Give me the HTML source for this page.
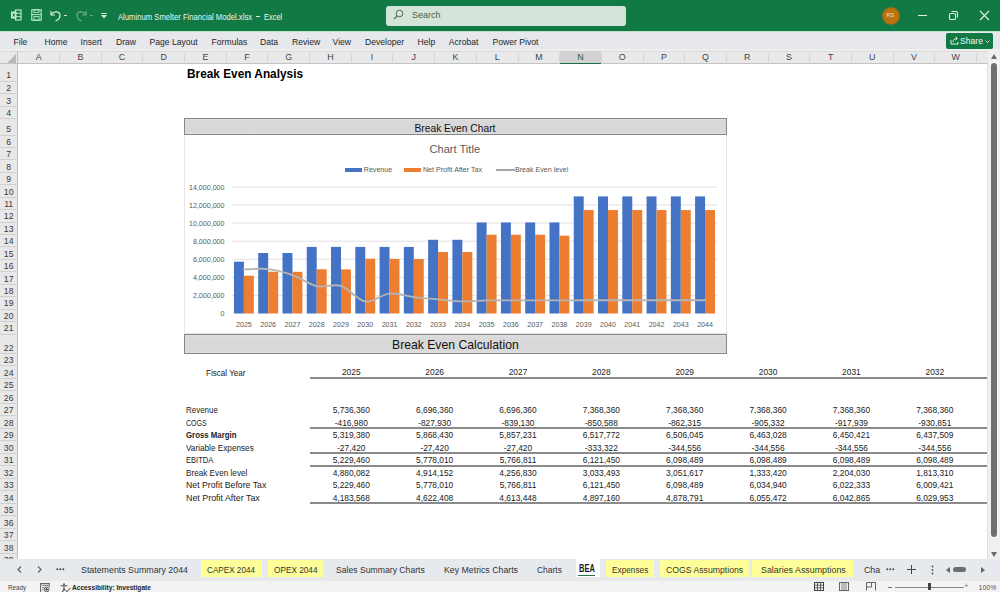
<!DOCTYPE html><html><head><meta charset="utf-8"><style>
*{margin:0;padding:0;box-sizing:border-box}
html,body{width:1000px;height:592px;overflow:hidden;background:#fff;font-family:"Liberation Sans", sans-serif;}
.a{position:absolute;white-space:nowrap}
.t{position:absolute;white-space:nowrap;line-height:1}
</style></head><body>
<div class="a" style="left:0;top:0;width:1000px;height:31px;background:#117a44"></div>
<svg class="a" style="left:10px;top:9px" width="12" height="12" viewBox="0 0 12 12">
<rect x="5.5" y="1" width="5.5" height="10" fill="none" stroke="#c2f0d4" stroke-width="1.1"/>
<line x1="5.5" y1="4.3" x2="11" y2="4.3" stroke="#c2f0d4" stroke-width="0.9"/>
<line x1="5.5" y1="7.6" x2="11" y2="7.6" stroke="#c2f0d4" stroke-width="0.9"/>
<rect x="1" y="2.5" width="5.5" height="7" fill="#c2f0d4"/>
<path d="M2.6 4.4 L4.9 7.6 M4.9 4.4 L2.6 7.6" stroke="#1d5f3a" stroke-width="0.9"/>
</svg>
<svg class="a" style="left:31px;top:9px" width="11" height="12" viewBox="0 0 11 12">
<rect x="0.8" y="0.8" width="9.4" height="10.4" fill="none" stroke="#b9f0cf" stroke-width="1.1"/>
<line x1="0.8" y1="5.6" x2="10.2" y2="5.6" stroke="#b9f0cf" stroke-width="1"/>
<rect x="3" y="0.8" width="5" height="2.6" fill="none" stroke="#b9f0cf" stroke-width="0.9"/>
<rect x="3" y="7.6" width="5" height="3.6" fill="none" stroke="#b9f0cf" stroke-width="0.9"/>
</svg>
<svg class="a" style="left:49px;top:8px" width="13" height="14" viewBox="0 0 13 14">
<path d="M2 3 L2 7 L6 7" fill="none" stroke="#dcefe3" stroke-width="1.2"/>
<path d="M2.5 6.5 C5 2.5 11 3 11 7.5 C11 10 9 12 6.5 13" fill="none" stroke="#dcefe3" stroke-width="1.2"/>
</svg>
<div class="a" style="left:64px;top:15px;width:3px;height:1px;background:#cfe6d7"></div>
<svg class="a" style="left:75px;top:8px" width="13" height="14" viewBox="0 0 13 14" opacity="0.45">
<path d="M11 3 L11 7 L7 7" fill="none" stroke="#dcefe3" stroke-width="1.2"/>
<path d="M10.5 6.5 C8 2.5 2 3 2 7.5 C2 10 4 12 6.5 13" fill="none" stroke="#dcefe3" stroke-width="1.2"/>
</svg>
<div class="a" style="left:90px;top:15px;width:3px;height:1px;background:#5ea57c"></div>
<div class="a" style="left:101px;top:13px;width:6px;height:1px;background:#cfe6d7"></div>
<svg class="a" style="left:101px;top:15px" width="6" height="4" viewBox="0 0 6 4"><path d="M0 0 L6 0 L3 3.5Z" fill="#cfe6d7"/></svg>
<div class="t" style="left:117.5px;top:12.5px;font-size:8.6px;color:#eef6f1;transform:scaleX(0.894);transform-origin:0 0">Aluminum Smelter Financial Model.xlsx</div>
<div class="a" style="left:256px;top:16px;width:3.5px;height:0.9px;background:#dfeee5"></div>
<div class="t" style="left:263.5px;top:12.5px;font-size:8.6px;color:#eef6f1;transform:scaleX(0.87);transform-origin:0 0">Excel</div>
<div class="a" style="left:385.5px;top:5.5px;width:240px;height:20px;background:#d5e4d9;border-radius:3px"></div>
<svg class="a" style="left:393px;top:9px" width="11" height="11" viewBox="0 0 11 11">
<circle cx="6.5" cy="4.5" r="3.3" fill="none" stroke="#4f6a58" stroke-width="1"/>
<line x1="4.2" y1="6.8" x2="1" y2="10" stroke="#4f6a58" stroke-width="1.1"/>
</svg>
<div class="t" style="left:412px;top:11px;font-size:9px;color:#4a5e50">Search</div>
<div class="a" style="left:883px;top:7.5px;width:16px;height:16px;border-radius:50%;background:#b8720e;box-shadow:0 0 0 1px #9a6a1c"></div>
<div class="t" style="left:886.5px;top:12.5px;font-size:5.5px;color:#f5e3c3">RS</div>
<div class="a" style="left:918px;top:15px;width:9px;height:1px;background:#e4f1e8"></div>
<svg class="a" style="left:948px;top:10px" width="11" height="11" viewBox="0 0 11 11">
<rect x="1.5" y="3.5" width="6" height="6" rx="1.2" fill="none" stroke="#e4f1e8" stroke-width="1.1"/>
<path d="M3.5 1.5 L8 1.5 Q9.5 1.5 9.5 3 L9.5 7.5" fill="none" stroke="#e4f1e8" stroke-width="1.1"/>
</svg>
<svg class="a" style="left:979px;top:10px" width="11" height="11" viewBox="0 0 11 11">
<path d="M1 1 L10 10 M10 1 L1 10" stroke="#e4f1e8" stroke-width="1.1"/>
</svg>
<div class="a" style="left:0;top:31px;width:1000px;height:17.5px;background:#e6e8ec"></div>
<div class="a" style="left:0;top:31px;width:1000px;height:1px;background:#b9e3c9"></div>
<div class="a" style="left:0;top:48.5px;width:1000px;height:2.5px;background:#eeeeee"></div>
<div class="t" style="left:13.5px;top:38px;font-size:8.6px;color:#262626">File</div>
<div class="t" style="left:44.6px;top:38px;font-size:8.6px;color:#262626">Home</div>
<div class="t" style="left:80.5px;top:38px;font-size:8.6px;color:#262626">Insert</div>
<div class="t" style="left:116px;top:38px;font-size:8.6px;color:#262626">Draw</div>
<div class="t" style="left:149.5px;top:38px;font-size:8.6px;color:#262626">Page Layout</div>
<div class="t" style="left:211.6px;top:38px;font-size:8.6px;color:#262626">Formulas</div>
<div class="t" style="left:260px;top:38px;font-size:8.6px;color:#262626">Data</div>
<div class="t" style="left:292px;top:38px;font-size:8.6px;color:#262626">Review</div>
<div class="t" style="left:332.6px;top:38px;font-size:8.6px;color:#262626">View</div>
<div class="t" style="left:365px;top:38px;font-size:8.6px;color:#262626">Developer</div>
<div class="t" style="left:417.6px;top:38px;font-size:8.6px;color:#262626">Help</div>
<div class="t" style="left:448.8px;top:38px;font-size:8.6px;color:#262626">Acrobat</div>
<div class="t" style="left:492.6px;top:38px;font-size:8.6px;color:#262626">Power Pivot</div>
<div class="a" style="left:946px;top:32.5px;width:46.5px;height:16px;background:#117a44;border-radius:2px"></div>
<svg class="a" style="left:950px;top:36px" width="9" height="9" viewBox="0 0 9 9">
<path d="M1 4 L1 8 L8 8 L8 6" fill="none" stroke="#e8f3ec" stroke-width="1"/>
<path d="M3 6 C3 3.5 5 2.5 7 2.5 M5.5 1 L7.3 2.5 L5.5 4" fill="none" stroke="#e8f3ec" stroke-width="1"/>
</svg>
<div class="t" style="left:960px;top:37px;font-size:8.6px;color:#f2f8f4">Share</div>
<svg class="a" style="left:985px;top:40px" width="5" height="3" viewBox="0 0 5 3"><path d="M0.5 0.5 L2.5 2.5 L4.5 0.5" fill="none" stroke="#e8f3ec" stroke-width="0.9"/></svg>
<div class="a" style="left:0;top:51px;width:1000px;height:12.6px;background:#e9e9e9;border-top:1px solid #dadada;border-bottom:1px solid #c4c4c4"></div>
<svg class="a" style="left:7px;top:53.5px" width="9" height="9" viewBox="0 0 9 9"><path d="M9 0 L9 9 L0 9Z" fill="#b8b8b8"/></svg>
<div class="a" style="left:16.6px;top:51px;width:1px;height:12.6px;background:#bdbdbd"></div>
<div class="a" style="left:59.019999999999996px;top:53px;width:1px;height:10.6px;background:#d6d6d6"></div>
<div class="t" style="left:17.84px;width:41.68px;text-align:center;top:53.2px;font-size:8.9px;color:#444">A</div>
<div class="a" style="left:100.69999999999999px;top:53px;width:1px;height:10.6px;background:#d6d6d6"></div>
<div class="t" style="left:59.519999999999996px;width:41.68px;text-align:center;top:53.2px;font-size:8.9px;color:#444">B</div>
<div class="a" style="left:142.38px;top:53px;width:1px;height:10.6px;background:#d6d6d6"></div>
<div class="t" style="left:101.2px;width:41.68px;text-align:center;top:53.2px;font-size:8.9px;color:#444">C</div>
<div class="a" style="left:184.06px;top:53px;width:1px;height:10.6px;background:#d6d6d6"></div>
<div class="t" style="left:142.88px;width:41.68px;text-align:center;top:53.2px;font-size:8.9px;color:#444">D</div>
<div class="a" style="left:225.74px;top:53px;width:1px;height:10.6px;background:#d6d6d6"></div>
<div class="t" style="left:184.56px;width:41.68px;text-align:center;top:53.2px;font-size:8.9px;color:#444">E</div>
<div class="a" style="left:267.42px;top:53px;width:1px;height:10.6px;background:#d6d6d6"></div>
<div class="t" style="left:226.24px;width:41.68px;text-align:center;top:53.2px;font-size:8.9px;color:#444">F</div>
<div class="a" style="left:309.09999999999997px;top:53px;width:1px;height:10.6px;background:#d6d6d6"></div>
<div class="t" style="left:267.91999999999996px;width:41.68px;text-align:center;top:53.2px;font-size:8.9px;color:#444">G</div>
<div class="a" style="left:350.78px;top:53px;width:1px;height:10.6px;background:#d6d6d6"></div>
<div class="t" style="left:309.59999999999997px;width:41.68px;text-align:center;top:53.2px;font-size:8.9px;color:#444">H</div>
<div class="a" style="left:392.46px;top:53px;width:1px;height:10.6px;background:#d6d6d6"></div>
<div class="t" style="left:351.28px;width:41.68px;text-align:center;top:53.2px;font-size:8.9px;color:#444">I</div>
<div class="a" style="left:434.14px;top:53px;width:1px;height:10.6px;background:#d6d6d6"></div>
<div class="t" style="left:392.96px;width:41.68px;text-align:center;top:53.2px;font-size:8.9px;color:#444">J</div>
<div class="a" style="left:475.82px;top:53px;width:1px;height:10.6px;background:#d6d6d6"></div>
<div class="t" style="left:434.64px;width:41.68px;text-align:center;top:53.2px;font-size:8.9px;color:#444">K</div>
<div class="a" style="left:517.5px;top:53px;width:1px;height:10.6px;background:#d6d6d6"></div>
<div class="t" style="left:476.32px;width:41.68px;text-align:center;top:53.2px;font-size:8.9px;color:#444">L</div>
<div class="a" style="left:559.18px;top:53px;width:1px;height:10.6px;background:#d6d6d6"></div>
<div class="t" style="left:518.0px;width:41.68px;text-align:center;top:53.2px;font-size:8.9px;color:#444">M</div>
<div class="a" style="left:559.6800000000001px;top:51px;width:41.68px;height:12.6px;background:#d3d3d3;border-bottom:1.5px solid #1f6e43"></div>
<div class="a" style="left:600.86px;top:53px;width:1px;height:10.6px;background:#d6d6d6"></div>
<div class="t" style="left:559.6800000000001px;width:41.68px;text-align:center;top:53.2px;font-size:8.9px;color:#1e5a39">N</div>
<div class="a" style="left:642.54px;top:53px;width:1px;height:10.6px;background:#d6d6d6"></div>
<div class="t" style="left:601.36px;width:41.68px;text-align:center;top:53.2px;font-size:8.9px;color:#444">O</div>
<div class="a" style="left:684.22px;top:53px;width:1px;height:10.6px;background:#d6d6d6"></div>
<div class="t" style="left:643.0400000000001px;width:41.68px;text-align:center;top:53.2px;font-size:8.9px;color:#444">P</div>
<div class="a" style="left:725.9px;top:53px;width:1px;height:10.6px;background:#d6d6d6"></div>
<div class="t" style="left:684.72px;width:41.68px;text-align:center;top:53.2px;font-size:8.9px;color:#444">Q</div>
<div class="a" style="left:767.5799999999999px;top:53px;width:1px;height:10.6px;background:#d6d6d6"></div>
<div class="t" style="left:726.4px;width:41.68px;text-align:center;top:53.2px;font-size:8.9px;color:#444">R</div>
<div class="a" style="left:809.26px;top:53px;width:1px;height:10.6px;background:#d6d6d6"></div>
<div class="t" style="left:768.08px;width:41.68px;text-align:center;top:53.2px;font-size:8.9px;color:#444">S</div>
<div class="a" style="left:850.9399999999999px;top:53px;width:1px;height:10.6px;background:#d6d6d6"></div>
<div class="t" style="left:809.76px;width:41.68px;text-align:center;top:53.2px;font-size:8.9px;color:#444">T</div>
<div class="a" style="left:892.62px;top:53px;width:1px;height:10.6px;background:#d6d6d6"></div>
<div class="t" style="left:851.44px;width:41.68px;text-align:center;top:53.2px;font-size:8.9px;color:#444">U</div>
<div class="a" style="left:934.3px;top:53px;width:1px;height:10.6px;background:#d6d6d6"></div>
<div class="t" style="left:893.12px;width:41.68px;text-align:center;top:53.2px;font-size:8.9px;color:#444">V</div>
<div class="a" style="left:975.98px;top:53px;width:1px;height:10.6px;background:#d6d6d6"></div>
<div class="t" style="left:934.8000000000001px;width:41.68px;text-align:center;top:53.2px;font-size:8.9px;color:#444">W</div>
<div class="a" style="left:0;top:63.6px;width:17.6px;height:496px;background:#e8e8e8;border-right:1px solid #bdbdbd"></div>
<div class="a" style="left:0;top:80.50px;width:17.6px;height:1px;background:#d0d0d0"></div>
<div class="t" style="left:0;width:17.4px;text-align:center;top:71.30px;font-size:8.7px;color:#3a3a3a">1</div>
<div class="a" style="left:0;top:93.10px;width:17.6px;height:1px;background:#d0d0d0"></div>
<div class="t" style="left:0;width:17.4px;text-align:center;top:83.90px;font-size:8.7px;color:#3a3a3a">2</div>
<div class="a" style="left:0;top:105.70px;width:17.6px;height:1px;background:#d0d0d0"></div>
<div class="t" style="left:0;width:17.4px;text-align:center;top:96.50px;font-size:8.7px;color:#3a3a3a">3</div>
<div class="a" style="left:0;top:118.30px;width:17.6px;height:1px;background:#d0d0d0"></div>
<div class="t" style="left:0;width:17.4px;text-align:center;top:109.10px;font-size:8.7px;color:#3a3a3a">4</div>
<div class="a" style="left:0;top:134.50px;width:17.6px;height:1px;background:#d0d0d0"></div>
<div class="t" style="left:0;width:17.4px;text-align:center;top:125.30px;font-size:8.7px;color:#3a3a3a">5</div>
<div class="a" style="left:0;top:146.94px;width:17.6px;height:1px;background:#d0d0d0"></div>
<div class="t" style="left:0;width:17.4px;text-align:center;top:137.74px;font-size:8.7px;color:#3a3a3a">6</div>
<div class="a" style="left:0;top:159.38px;width:17.6px;height:1px;background:#d0d0d0"></div>
<div class="t" style="left:0;width:17.4px;text-align:center;top:150.18px;font-size:8.7px;color:#3a3a3a">7</div>
<div class="a" style="left:0;top:171.82px;width:17.6px;height:1px;background:#d0d0d0"></div>
<div class="t" style="left:0;width:17.4px;text-align:center;top:162.62px;font-size:8.7px;color:#3a3a3a">8</div>
<div class="a" style="left:0;top:184.26px;width:17.6px;height:1px;background:#d0d0d0"></div>
<div class="t" style="left:0;width:17.4px;text-align:center;top:175.06px;font-size:8.7px;color:#3a3a3a">9</div>
<div class="a" style="left:0;top:196.70px;width:17.6px;height:1px;background:#d0d0d0"></div>
<div class="t" style="left:0;width:17.4px;text-align:center;top:187.50px;font-size:8.7px;color:#3a3a3a">10</div>
<div class="a" style="left:0;top:209.14px;width:17.6px;height:1px;background:#d0d0d0"></div>
<div class="t" style="left:0;width:17.4px;text-align:center;top:199.94px;font-size:8.7px;color:#3a3a3a">11</div>
<div class="a" style="left:0;top:221.58px;width:17.6px;height:1px;background:#d0d0d0"></div>
<div class="t" style="left:0;width:17.4px;text-align:center;top:212.38px;font-size:8.7px;color:#3a3a3a">12</div>
<div class="a" style="left:0;top:234.02px;width:17.6px;height:1px;background:#d0d0d0"></div>
<div class="t" style="left:0;width:17.4px;text-align:center;top:224.82px;font-size:8.7px;color:#3a3a3a">13</div>
<div class="a" style="left:0;top:246.46px;width:17.6px;height:1px;background:#d0d0d0"></div>
<div class="t" style="left:0;width:17.4px;text-align:center;top:237.26px;font-size:8.7px;color:#3a3a3a">14</div>
<div class="a" style="left:0;top:258.90px;width:17.6px;height:1px;background:#d0d0d0"></div>
<div class="t" style="left:0;width:17.4px;text-align:center;top:249.70px;font-size:8.7px;color:#3a3a3a">15</div>
<div class="a" style="left:0;top:271.34px;width:17.6px;height:1px;background:#d0d0d0"></div>
<div class="t" style="left:0;width:17.4px;text-align:center;top:262.14px;font-size:8.7px;color:#3a3a3a">16</div>
<div class="a" style="left:0;top:283.78px;width:17.6px;height:1px;background:#d0d0d0"></div>
<div class="t" style="left:0;width:17.4px;text-align:center;top:274.58px;font-size:8.7px;color:#3a3a3a">17</div>
<div class="a" style="left:0;top:296.22px;width:17.6px;height:1px;background:#d0d0d0"></div>
<div class="t" style="left:0;width:17.4px;text-align:center;top:287.02px;font-size:8.7px;color:#3a3a3a">18</div>
<div class="a" style="left:0;top:308.66px;width:17.6px;height:1px;background:#d0d0d0"></div>
<div class="t" style="left:0;width:17.4px;text-align:center;top:299.46px;font-size:8.7px;color:#3a3a3a">19</div>
<div class="a" style="left:0;top:321.10px;width:17.6px;height:1px;background:#d0d0d0"></div>
<div class="t" style="left:0;width:17.4px;text-align:center;top:311.90px;font-size:8.7px;color:#3a3a3a">20</div>
<div class="a" style="left:0;top:333.54px;width:17.6px;height:1px;background:#d0d0d0"></div>
<div class="t" style="left:0;width:17.4px;text-align:center;top:324.34px;font-size:8.7px;color:#3a3a3a">21</div>
<div class="a" style="left:0;top:352.74px;width:17.6px;height:1px;background:#d0d0d0"></div>
<div class="t" style="left:0;width:17.4px;text-align:center;top:343.54px;font-size:8.7px;color:#3a3a3a">22</div>
<div class="a" style="left:0;top:365.24px;width:17.6px;height:1px;background:#d0d0d0"></div>
<div class="t" style="left:0;width:17.4px;text-align:center;top:356.04px;font-size:8.7px;color:#3a3a3a">23</div>
<div class="a" style="left:0;top:377.74px;width:17.6px;height:1px;background:#d0d0d0"></div>
<div class="t" style="left:0;width:17.4px;text-align:center;top:368.54px;font-size:8.7px;color:#3a3a3a">24</div>
<div class="a" style="left:0;top:390.24px;width:17.6px;height:1px;background:#d0d0d0"></div>
<div class="t" style="left:0;width:17.4px;text-align:center;top:381.04px;font-size:8.7px;color:#3a3a3a">25</div>
<div class="a" style="left:0;top:402.74px;width:17.6px;height:1px;background:#d0d0d0"></div>
<div class="t" style="left:0;width:17.4px;text-align:center;top:393.54px;font-size:8.7px;color:#3a3a3a">26</div>
<div class="a" style="left:0;top:415.24px;width:17.6px;height:1px;background:#d0d0d0"></div>
<div class="t" style="left:0;width:17.4px;text-align:center;top:406.04px;font-size:8.7px;color:#3a3a3a">27</div>
<div class="a" style="left:0;top:427.74px;width:17.6px;height:1px;background:#d0d0d0"></div>
<div class="t" style="left:0;width:17.4px;text-align:center;top:418.54px;font-size:8.7px;color:#3a3a3a">28</div>
<div class="a" style="left:0;top:440.24px;width:17.6px;height:1px;background:#d0d0d0"></div>
<div class="t" style="left:0;width:17.4px;text-align:center;top:431.04px;font-size:8.7px;color:#3a3a3a">29</div>
<div class="a" style="left:0;top:452.74px;width:17.6px;height:1px;background:#d0d0d0"></div>
<div class="t" style="left:0;width:17.4px;text-align:center;top:443.54px;font-size:8.7px;color:#3a3a3a">30</div>
<div class="a" style="left:0;top:465.24px;width:17.6px;height:1px;background:#d0d0d0"></div>
<div class="t" style="left:0;width:17.4px;text-align:center;top:456.04px;font-size:8.7px;color:#3a3a3a">31</div>
<div class="a" style="left:0;top:477.74px;width:17.6px;height:1px;background:#d0d0d0"></div>
<div class="t" style="left:0;width:17.4px;text-align:center;top:468.54px;font-size:8.7px;color:#3a3a3a">32</div>
<div class="a" style="left:0;top:490.24px;width:17.6px;height:1px;background:#d0d0d0"></div>
<div class="t" style="left:0;width:17.4px;text-align:center;top:481.04px;font-size:8.7px;color:#3a3a3a">33</div>
<div class="a" style="left:0;top:502.74px;width:17.6px;height:1px;background:#d0d0d0"></div>
<div class="t" style="left:0;width:17.4px;text-align:center;top:493.54px;font-size:8.7px;color:#3a3a3a">34</div>
<div class="a" style="left:0;top:515.24px;width:17.6px;height:1px;background:#d0d0d0"></div>
<div class="t" style="left:0;width:17.4px;text-align:center;top:506.04px;font-size:8.7px;color:#3a3a3a">35</div>
<div class="a" style="left:0;top:527.74px;width:17.6px;height:1px;background:#d0d0d0"></div>
<div class="t" style="left:0;width:17.4px;text-align:center;top:518.54px;font-size:8.7px;color:#3a3a3a">36</div>
<div class="a" style="left:0;top:540.24px;width:17.6px;height:1px;background:#d0d0d0"></div>
<div class="t" style="left:0;width:17.4px;text-align:center;top:531.04px;font-size:8.7px;color:#3a3a3a">37</div>
<div class="a" style="left:0;top:552.74px;width:17.6px;height:1px;background:#d0d0d0"></div>
<div class="t" style="left:0;width:17.4px;text-align:center;top:543.54px;font-size:8.7px;color:#3a3a3a">38</div>
<div class="a" style="left:0;top:565.24px;width:17.6px;height:1px;background:#d0d0d0"></div>
<div class="t" style="left:0;width:17.4px;text-align:center;top:556.04px;font-size:8.7px;color:#3a3a3a">39</div>
<div class="a" style="left:987.5px;top:51px;width:12.5px;height:508px;background:#f0f0f0"></div>
<div class="a" style="left:987px;top:63.6px;width:1px;height:495.4px;background:#e0e0e0"></div>
<div class="a" style="left:990.5px;top:62px;width:7.5px;height:476px;background:#fafafa"></div>
<svg class="a" style="left:991px;top:54px" width="6" height="5" viewBox="0 0 6 5"><path d="M0 5 L3 0 L6 5Z" fill="#6b6b6b"/></svg>
<div class="a" style="left:991.2px;top:62.7px;width:5.5px;height:474px;background:#707070;border-radius:3px"></div>
<svg class="a" style="left:991px;top:552px" width="6" height="5" viewBox="0 0 6 5"><path d="M0 0 L3 5 L6 0Z" fill="#6b6b6b"/></svg>
<div class="t" style="left:187px;top:67.5px;font-size:12.8px;font-weight:bold;color:#000;transform:scaleX(0.925);transform-origin:0 0">Break Even Analysis</div>
<div class="a" style="left:183.5px;top:134px;width:543.5px;height:200px;border:1px solid #e6e6e6;border-top:none;background:#fff"></div>
<div class="a" style="left:184px;top:118.4px;width:543px;height:16.900000000000006px;border:1.6px solid #878787;background:linear-gradient(#e0e0e0,#d9d9d9 15%,#d8d8d8 85%,#e0e0e0)"></div>
<div class="t" style="left:414.5px;top:124px;font-size:10.25px;color:#111">Break Even Chart</div>
<svg class="a" style="left:0;top:0" width="1000" height="592" viewBox="0 0 1000 592">
<line x1="231.76" y1="295.43" x2="717.2" y2="295.43" stroke="#d9d9d9" stroke-width="0.8"/>
<line x1="231.76" y1="277.36" x2="717.2" y2="277.36" stroke="#d9d9d9" stroke-width="0.8"/>
<line x1="231.76" y1="259.29" x2="717.2" y2="259.29" stroke="#d9d9d9" stroke-width="0.8"/>
<line x1="231.76" y1="241.22" x2="717.2" y2="241.22" stroke="#d9d9d9" stroke-width="0.8"/>
<line x1="231.76" y1="223.15" x2="717.2" y2="223.15" stroke="#d9d9d9" stroke-width="0.8"/>
<line x1="231.76" y1="205.08" x2="717.2" y2="205.08" stroke="#d9d9d9" stroke-width="0.8"/>
<line x1="231.76" y1="187.01" x2="717.2" y2="187.01" stroke="#d9d9d9" stroke-width="0.8"/>
<rect x="233.95" y="261.67" width="9.95" height="51.83" fill="#4472c4"/>
<rect x="243.90" y="275.70" width="9.95" height="37.80" fill="#ed7d31"/>
<rect x="258.22" y="253.00" width="9.95" height="60.50" fill="#4472c4"/>
<rect x="268.17" y="271.74" width="9.95" height="41.76" fill="#ed7d31"/>
<rect x="282.49" y="253.00" width="9.95" height="60.50" fill="#4472c4"/>
<rect x="292.44" y="271.82" width="9.95" height="41.68" fill="#ed7d31"/>
<rect x="306.76" y="246.93" width="9.95" height="66.57" fill="#4472c4"/>
<rect x="316.71" y="269.25" width="9.95" height="44.25" fill="#ed7d31"/>
<rect x="331.03" y="246.93" width="9.95" height="66.57" fill="#4472c4"/>
<rect x="340.98" y="269.42" width="9.95" height="44.08" fill="#ed7d31"/>
<rect x="355.31" y="246.93" width="9.95" height="66.57" fill="#4472c4"/>
<rect x="365.26" y="258.79" width="9.95" height="54.71" fill="#ed7d31"/>
<rect x="379.58" y="246.93" width="9.95" height="66.57" fill="#4472c4"/>
<rect x="389.53" y="258.90" width="9.95" height="54.60" fill="#ed7d31"/>
<rect x="403.85" y="246.93" width="9.95" height="66.57" fill="#4472c4"/>
<rect x="413.80" y="259.02" width="9.95" height="54.48" fill="#ed7d31"/>
<rect x="428.12" y="239.77" width="9.95" height="73.73" fill="#4472c4"/>
<rect x="438.07" y="252.06" width="9.95" height="61.44" fill="#ed7d31"/>
<rect x="452.39" y="239.77" width="9.95" height="73.73" fill="#4472c4"/>
<rect x="462.34" y="252.06" width="9.95" height="61.44" fill="#ed7d31"/>
<rect x="476.67" y="222.43" width="9.95" height="91.07" fill="#4472c4"/>
<rect x="486.62" y="234.71" width="9.95" height="78.79" fill="#ed7d31"/>
<rect x="500.94" y="222.43" width="9.95" height="91.07" fill="#4472c4"/>
<rect x="510.89" y="234.71" width="9.95" height="78.79" fill="#ed7d31"/>
<rect x="525.21" y="222.43" width="9.95" height="91.07" fill="#4472c4"/>
<rect x="535.16" y="234.71" width="9.95" height="78.79" fill="#ed7d31"/>
<rect x="549.48" y="222.43" width="9.95" height="91.07" fill="#4472c4"/>
<rect x="559.43" y="235.71" width="9.95" height="77.79" fill="#ed7d31"/>
<rect x="573.75" y="196.41" width="9.95" height="117.09" fill="#4472c4"/>
<rect x="583.70" y="210.05" width="9.95" height="103.45" fill="#ed7d31"/>
<rect x="598.03" y="196.41" width="9.95" height="117.09" fill="#4472c4"/>
<rect x="607.98" y="210.05" width="9.95" height="103.45" fill="#ed7d31"/>
<rect x="622.30" y="196.41" width="9.95" height="117.09" fill="#4472c4"/>
<rect x="632.25" y="210.05" width="9.95" height="103.45" fill="#ed7d31"/>
<rect x="646.57" y="196.41" width="9.95" height="117.09" fill="#4472c4"/>
<rect x="656.52" y="210.05" width="9.95" height="103.45" fill="#ed7d31"/>
<rect x="670.84" y="196.41" width="9.95" height="117.09" fill="#4472c4"/>
<rect x="680.79" y="210.05" width="9.95" height="103.45" fill="#ed7d31"/>
<rect x="695.11" y="196.41" width="9.95" height="117.09" fill="#4472c4"/>
<rect x="705.06" y="210.05" width="9.95" height="103.45" fill="#ed7d31"/>
<path d="M243.90,269.41 C247.94,269.36 260.08,268.16 268.17,269.10 C276.26,270.04 284.35,272.21 292.44,275.04 C300.53,277.87 308.62,284.28 316.71,286.09 C324.80,287.91 332.89,283.37 340.98,285.93 C349.07,288.49 357.17,300.18 365.26,301.45 C373.35,302.73 381.44,294.31 389.53,293.59 C397.62,292.86 405.71,296.15 413.80,297.12 C421.89,298.09 429.98,298.69 438.07,299.41 C446.16,300.12 454.25,301.23 462.34,301.39 C470.43,301.56 478.53,300.56 486.62,300.40 C494.71,300.23 502.80,300.40 510.89,300.40 C518.98,300.40 527.07,300.40 535.16,300.40 C543.25,300.40 551.34,300.41 559.43,300.40 C567.52,300.38 575.61,300.32 583.70,300.31 C591.79,300.29 599.89,300.31 607.98,300.31 C616.07,300.31 624.16,300.31 632.25,300.31 C640.34,300.31 648.43,300.31 656.52,300.31 C664.61,300.31 672.70,300.31 680.79,300.31 C688.88,300.31 701.02,300.31 705.06,300.31" fill="none" stroke="#b5b5b5" stroke-width="1.9" stroke-linecap="round"/>
</svg>
<div class="t" style="left:150px;width:74.5px;text-align:right;top:311.10px;font-size:7.1px;color:#595959">0</div>
<div class="t" style="left:150px;width:74.5px;text-align:right;top:293.03px;font-size:7.1px;color:#595959">2,000,000</div>
<div class="t" style="left:150px;width:74.5px;text-align:right;top:274.96px;font-size:7.1px;color:#595959">4,000,000</div>
<div class="t" style="left:150px;width:74.5px;text-align:right;top:256.89px;font-size:7.1px;color:#595959">6,000,000</div>
<div class="t" style="left:150px;width:74.5px;text-align:right;top:238.82px;font-size:7.1px;color:#595959">8,000,000</div>
<div class="t" style="left:150px;width:74.5px;text-align:right;top:220.75px;font-size:7.1px;color:#595959">10,000,000</div>
<div class="t" style="left:150px;width:74.5px;text-align:right;top:202.68px;font-size:7.1px;color:#595959">12,000,000</div>
<div class="t" style="left:150px;width:74.5px;text-align:right;top:184.61px;font-size:7.1px;color:#595959">14,000,000</div>
<div class="t" style="left:223.90px;width:40px;text-align:center;top:322.3px;font-size:7.1px;color:#595959">2025</div>
<div class="t" style="left:248.17px;width:40px;text-align:center;top:322.3px;font-size:7.1px;color:#595959">2026</div>
<div class="t" style="left:272.44px;width:40px;text-align:center;top:322.3px;font-size:7.1px;color:#595959">2027</div>
<div class="t" style="left:296.71px;width:40px;text-align:center;top:322.3px;font-size:7.1px;color:#595959">2028</div>
<div class="t" style="left:320.98px;width:40px;text-align:center;top:322.3px;font-size:7.1px;color:#595959">2029</div>
<div class="t" style="left:345.26px;width:40px;text-align:center;top:322.3px;font-size:7.1px;color:#595959">2030</div>
<div class="t" style="left:369.53px;width:40px;text-align:center;top:322.3px;font-size:7.1px;color:#595959">2031</div>
<div class="t" style="left:393.80px;width:40px;text-align:center;top:322.3px;font-size:7.1px;color:#595959">2032</div>
<div class="t" style="left:418.07px;width:40px;text-align:center;top:322.3px;font-size:7.1px;color:#595959">2033</div>
<div class="t" style="left:442.34px;width:40px;text-align:center;top:322.3px;font-size:7.1px;color:#595959">2034</div>
<div class="t" style="left:466.62px;width:40px;text-align:center;top:322.3px;font-size:7.1px;color:#595959">2035</div>
<div class="t" style="left:490.89px;width:40px;text-align:center;top:322.3px;font-size:7.1px;color:#595959">2036</div>
<div class="t" style="left:515.16px;width:40px;text-align:center;top:322.3px;font-size:7.1px;color:#595959">2037</div>
<div class="t" style="left:539.43px;width:40px;text-align:center;top:322.3px;font-size:7.1px;color:#595959">2038</div>
<div class="t" style="left:563.70px;width:40px;text-align:center;top:322.3px;font-size:7.1px;color:#595959">2039</div>
<div class="t" style="left:587.98px;width:40px;text-align:center;top:322.3px;font-size:7.1px;color:#595959">2040</div>
<div class="t" style="left:612.25px;width:40px;text-align:center;top:322.3px;font-size:7.1px;color:#595959">2041</div>
<div class="t" style="left:636.52px;width:40px;text-align:center;top:322.3px;font-size:7.1px;color:#595959">2042</div>
<div class="t" style="left:660.79px;width:40px;text-align:center;top:322.3px;font-size:7.1px;color:#595959">2043</div>
<div class="t" style="left:685.06px;width:40px;text-align:center;top:322.3px;font-size:7.1px;color:#595959">2044</div>
<div class="t" style="left:429.5px;top:144.3px;font-size:11.1px;color:#595959">Chart Title</div>
<div class="a" style="left:345px;top:168px;width:16.7px;height:3.5px;background:#4472c4"></div>
<div class="t" style="left:363.8px;top:167.1px;font-size:7.1px;color:#595959">Revenue</div>
<div class="a" style="left:404px;top:168px;width:17px;height:3.5px;background:#ed7d31"></div>
<div class="t" style="left:423px;top:167.1px;font-size:7.1px;color:#595959">Net Profit After Tax</div>
<div class="a" style="left:496.4px;top:168.8px;width:18.6px;height:1.8px;background:#a5a5a5"></div>
<div class="t" style="left:515px;top:167.1px;font-size:7.1px;color:#595959">Break Even level</div>
<div class="a" style="left:184px;top:334px;width:543px;height:19.80000000000001px;border:1.6px solid #878787;background:linear-gradient(#e0e0e0,#d9d9d9 15%,#d8d8d8 85%,#e0e0e0)"></div>
<div class="t" style="left:392px;top:339px;font-size:12.2px;color:#111">Break Even Calculation</div>
<div class="t" style="left:206px;top:368.84px;font-size:8.4px;color:#222;transform:scaleX(0.962);transform-origin:0 0">Fiscal Year</div>
<div class="t" style="left:309.60px;width:83.36px;text-align:center;top:368.04px;font-size:8.4px;font-weight:normal;color:#222">2025</div>
<div class="t" style="left:392.96px;width:83.36px;text-align:center;top:368.04px;font-size:8.4px;font-weight:normal;color:#222">2026</div>
<div class="t" style="left:476.32px;width:83.36px;text-align:center;top:368.04px;font-size:8.4px;font-weight:normal;color:#222">2027</div>
<div class="t" style="left:559.68px;width:83.36px;text-align:center;top:368.04px;font-size:8.4px;font-weight:normal;color:#222">2028</div>
<div class="t" style="left:643.04px;width:83.36px;text-align:center;top:368.04px;font-size:8.4px;font-weight:normal;color:#222">2029</div>
<div class="t" style="left:726.40px;width:83.36px;text-align:center;top:368.04px;font-size:8.4px;font-weight:normal;color:#222">2030</div>
<div class="t" style="left:809.76px;width:83.36px;text-align:center;top:368.04px;font-size:8.4px;font-weight:normal;color:#222">2031</div>
<div class="t" style="left:893.12px;width:83.36px;text-align:center;top:368.04px;font-size:8.4px;font-weight:normal;color:#222">2032</div>
<div class="t" style="left:186.3px;top:406.34px;font-size:8.4px;font-weight:normal;color:#222;transform:scaleX(0.951);transform-origin:0 0">Revenue</div>
<div class="t" style="left:309.60px;width:83.36px;text-align:center;top:406.14px;font-size:8.4px;font-weight:normal;color:#222">5,736,360</div>
<div class="t" style="left:392.96px;width:83.36px;text-align:center;top:406.14px;font-size:8.4px;font-weight:normal;color:#222">6,696,360</div>
<div class="t" style="left:476.32px;width:83.36px;text-align:center;top:406.14px;font-size:8.4px;font-weight:normal;color:#222">6,696,360</div>
<div class="t" style="left:559.68px;width:83.36px;text-align:center;top:406.14px;font-size:8.4px;font-weight:normal;color:#222">7,368,360</div>
<div class="t" style="left:643.04px;width:83.36px;text-align:center;top:406.14px;font-size:8.4px;font-weight:normal;color:#222">7,368,360</div>
<div class="t" style="left:726.40px;width:83.36px;text-align:center;top:406.14px;font-size:8.4px;font-weight:normal;color:#222">7,368,360</div>
<div class="t" style="left:809.76px;width:83.36px;text-align:center;top:406.14px;font-size:8.4px;font-weight:normal;color:#222">7,368,360</div>
<div class="t" style="left:893.12px;width:83.36px;text-align:center;top:406.14px;font-size:8.4px;font-weight:normal;color:#222">7,368,360</div>
<div class="t" style="left:186.3px;top:418.84px;font-size:8.4px;font-weight:normal;color:#222;transform:scaleX(0.837);transform-origin:0 0">COGS</div>
<div class="t" style="left:309.60px;width:83.36px;text-align:center;top:418.64px;font-size:8.4px;font-weight:normal;color:#222">-416,980</div>
<div class="t" style="left:392.96px;width:83.36px;text-align:center;top:418.64px;font-size:8.4px;font-weight:normal;color:#222">-827,930</div>
<div class="t" style="left:476.32px;width:83.36px;text-align:center;top:418.64px;font-size:8.4px;font-weight:normal;color:#222">-839,130</div>
<div class="t" style="left:559.68px;width:83.36px;text-align:center;top:418.64px;font-size:8.4px;font-weight:normal;color:#222">-850,588</div>
<div class="t" style="left:643.04px;width:83.36px;text-align:center;top:418.64px;font-size:8.4px;font-weight:normal;color:#222">-862,315</div>
<div class="t" style="left:726.40px;width:83.36px;text-align:center;top:418.64px;font-size:8.4px;font-weight:normal;color:#222">-905,332</div>
<div class="t" style="left:809.76px;width:83.36px;text-align:center;top:418.64px;font-size:8.4px;font-weight:normal;color:#222">-917,939</div>
<div class="t" style="left:893.12px;width:83.36px;text-align:center;top:418.64px;font-size:8.4px;font-weight:normal;color:#222">-930,851</div>
<div class="t" style="left:186.3px;top:431.34px;font-size:8.4px;font-weight:bold;color:#222;transform:scaleX(0.936);transform-origin:0 0">Gross Margin</div>
<div class="t" style="left:309.60px;width:83.36px;text-align:center;top:431.14px;font-size:8.4px;font-weight:normal;color:#222">5,319,380</div>
<div class="t" style="left:392.96px;width:83.36px;text-align:center;top:431.14px;font-size:8.4px;font-weight:normal;color:#222">5,868,430</div>
<div class="t" style="left:476.32px;width:83.36px;text-align:center;top:431.14px;font-size:8.4px;font-weight:normal;color:#222">5,857,231</div>
<div class="t" style="left:559.68px;width:83.36px;text-align:center;top:431.14px;font-size:8.4px;font-weight:normal;color:#222">6,517,772</div>
<div class="t" style="left:643.04px;width:83.36px;text-align:center;top:431.14px;font-size:8.4px;font-weight:normal;color:#222">6,506,045</div>
<div class="t" style="left:726.40px;width:83.36px;text-align:center;top:431.14px;font-size:8.4px;font-weight:normal;color:#222">6,463,028</div>
<div class="t" style="left:809.76px;width:83.36px;text-align:center;top:431.14px;font-size:8.4px;font-weight:normal;color:#222">6,450,421</div>
<div class="t" style="left:893.12px;width:83.36px;text-align:center;top:431.14px;font-size:8.4px;font-weight:normal;color:#222">6,437,509</div>
<div class="t" style="left:186.3px;top:443.84px;font-size:8.4px;font-weight:normal;color:#222;transform:scaleX(0.979);transform-origin:0 0">Variable Expenses</div>
<div class="t" style="left:309.60px;width:83.36px;text-align:center;top:443.64px;font-size:8.4px;font-weight:normal;color:#222">-27,420</div>
<div class="t" style="left:392.96px;width:83.36px;text-align:center;top:443.64px;font-size:8.4px;font-weight:normal;color:#222">-27,420</div>
<div class="t" style="left:476.32px;width:83.36px;text-align:center;top:443.64px;font-size:8.4px;font-weight:normal;color:#222">-27,420</div>
<div class="t" style="left:559.68px;width:83.36px;text-align:center;top:443.64px;font-size:8.4px;font-weight:normal;color:#222">-333,322</div>
<div class="t" style="left:643.04px;width:83.36px;text-align:center;top:443.64px;font-size:8.4px;font-weight:normal;color:#222">-344,556</div>
<div class="t" style="left:726.40px;width:83.36px;text-align:center;top:443.64px;font-size:8.4px;font-weight:normal;color:#222">-344,556</div>
<div class="t" style="left:809.76px;width:83.36px;text-align:center;top:443.64px;font-size:8.4px;font-weight:normal;color:#222">-344,556</div>
<div class="t" style="left:893.12px;width:83.36px;text-align:center;top:443.64px;font-size:8.4px;font-weight:normal;color:#222">-344,556</div>
<div class="t" style="left:186.3px;top:456.34px;font-size:8.4px;font-weight:normal;color:#222;transform:scaleX(0.906);transform-origin:0 0">EBITDA</div>
<div class="t" style="left:309.60px;width:83.36px;text-align:center;top:456.14px;font-size:8.4px;font-weight:normal;color:#222">5,229,460</div>
<div class="t" style="left:392.96px;width:83.36px;text-align:center;top:456.14px;font-size:8.4px;font-weight:normal;color:#222">5,778,010</div>
<div class="t" style="left:476.32px;width:83.36px;text-align:center;top:456.14px;font-size:8.4px;font-weight:normal;color:#222">5,766,811</div>
<div class="t" style="left:559.68px;width:83.36px;text-align:center;top:456.14px;font-size:8.4px;font-weight:normal;color:#222">6,121,450</div>
<div class="t" style="left:643.04px;width:83.36px;text-align:center;top:456.14px;font-size:8.4px;font-weight:normal;color:#222">6,098,489</div>
<div class="t" style="left:726.40px;width:83.36px;text-align:center;top:456.14px;font-size:8.4px;font-weight:normal;color:#222">6,098,489</div>
<div class="t" style="left:809.76px;width:83.36px;text-align:center;top:456.14px;font-size:8.4px;font-weight:normal;color:#222">6,098,489</div>
<div class="t" style="left:893.12px;width:83.36px;text-align:center;top:456.14px;font-size:8.4px;font-weight:normal;color:#222">6,098,489</div>
<div class="t" style="left:186.3px;top:468.84px;font-size:8.4px;font-weight:normal;color:#222;transform:scaleX(0.976);transform-origin:0 0">Break Even level</div>
<div class="t" style="left:309.60px;width:83.36px;text-align:center;top:468.64px;font-size:8.4px;font-weight:normal;color:#222">4,880,082</div>
<div class="t" style="left:392.96px;width:83.36px;text-align:center;top:468.64px;font-size:8.4px;font-weight:normal;color:#222">4,914,152</div>
<div class="t" style="left:476.32px;width:83.36px;text-align:center;top:468.64px;font-size:8.4px;font-weight:normal;color:#222">4,256,830</div>
<div class="t" style="left:559.68px;width:83.36px;text-align:center;top:468.64px;font-size:8.4px;font-weight:normal;color:#222">3,033,493</div>
<div class="t" style="left:643.04px;width:83.36px;text-align:center;top:468.64px;font-size:8.4px;font-weight:normal;color:#222">3,051,617</div>
<div class="t" style="left:726.40px;width:83.36px;text-align:center;top:468.64px;font-size:8.4px;font-weight:normal;color:#222">1,333,420</div>
<div class="t" style="left:809.76px;width:83.36px;text-align:center;top:468.64px;font-size:8.4px;font-weight:normal;color:#222">2,204,030</div>
<div class="t" style="left:893.12px;width:83.36px;text-align:center;top:468.64px;font-size:8.4px;font-weight:normal;color:#222">1,813,310</div>
<div class="t" style="left:186.3px;top:481.34px;font-size:8.4px;font-weight:normal;color:#222;transform:scaleX(1.041);transform-origin:0 0">Net Profit Before Tax</div>
<div class="t" style="left:309.60px;width:83.36px;text-align:center;top:481.14px;font-size:8.4px;font-weight:normal;color:#222">5,229,460</div>
<div class="t" style="left:392.96px;width:83.36px;text-align:center;top:481.14px;font-size:8.4px;font-weight:normal;color:#222">5,778,010</div>
<div class="t" style="left:476.32px;width:83.36px;text-align:center;top:481.14px;font-size:8.4px;font-weight:normal;color:#222">5,766,811</div>
<div class="t" style="left:559.68px;width:83.36px;text-align:center;top:481.14px;font-size:8.4px;font-weight:normal;color:#222">6,121,450</div>
<div class="t" style="left:643.04px;width:83.36px;text-align:center;top:481.14px;font-size:8.4px;font-weight:normal;color:#222">6,098,489</div>
<div class="t" style="left:726.40px;width:83.36px;text-align:center;top:481.14px;font-size:8.4px;font-weight:normal;color:#222">6,034,940</div>
<div class="t" style="left:809.76px;width:83.36px;text-align:center;top:481.14px;font-size:8.4px;font-weight:normal;color:#222">6,022,333</div>
<div class="t" style="left:893.12px;width:83.36px;text-align:center;top:481.14px;font-size:8.4px;font-weight:normal;color:#222">6,009,421</div>
<div class="t" style="left:186.3px;top:493.84px;font-size:8.4px;font-weight:normal;color:#222;transform:scaleX(1.059);transform-origin:0 0">Net Profit After Tax</div>
<div class="t" style="left:309.60px;width:83.36px;text-align:center;top:493.64px;font-size:8.4px;font-weight:normal;color:#222">4,183,568</div>
<div class="t" style="left:392.96px;width:83.36px;text-align:center;top:493.64px;font-size:8.4px;font-weight:normal;color:#222">4,622,408</div>
<div class="t" style="left:476.32px;width:83.36px;text-align:center;top:493.64px;font-size:8.4px;font-weight:normal;color:#222">4,613,448</div>
<div class="t" style="left:559.68px;width:83.36px;text-align:center;top:493.64px;font-size:8.4px;font-weight:normal;color:#222">4,897,160</div>
<div class="t" style="left:643.04px;width:83.36px;text-align:center;top:493.64px;font-size:8.4px;font-weight:normal;color:#222">4,878,791</div>
<div class="t" style="left:726.40px;width:83.36px;text-align:center;top:493.64px;font-size:8.4px;font-weight:normal;color:#222">6,055,472</div>
<div class="t" style="left:809.76px;width:83.36px;text-align:center;top:493.64px;font-size:8.4px;font-weight:normal;color:#222">6,042,865</div>
<div class="t" style="left:893.12px;width:83.36px;text-align:center;top:493.64px;font-size:8.4px;font-weight:normal;color:#222">6,029,953</div>
<div class="a" style="left:309.6px;top:377.44px;width:677.8px;height:1.6px;background:#8a8a8a"></div>
<div class="a" style="left:309.6px;top:427.44px;width:677.8px;height:1.6px;background:#8a8a8a"></div>
<div class="a" style="left:309.6px;top:452.44px;width:677.8px;height:1.6px;background:#8a8a8a"></div>
<div class="a" style="left:309.6px;top:464.94px;width:677.8px;height:1.6px;background:#8a8a8a"></div>
<div class="a" style="left:309.6px;top:502.44px;width:677.8px;height:1.6px;background:#8a8a8a"></div>
<div class="a" style="left:0;top:559px;width:1000px;height:18px;background:#e6e9ee"></div>
<div class="a" style="left:0;top:577px;width:1000px;height:4px;background:#e9e9e9"></div>
<div class="a" style="left:0;top:581px;width:1000px;height:11px;background:#f3f3f3"></div>
<svg class="a" style="left:16.5px;top:566px" width="5" height="7" viewBox="0 0 5 7"><path d="M4 0.5 L1 3.5 L4 6.5" fill="none" stroke="#666" stroke-width="1.3"/></svg>
<svg class="a" style="left:37px;top:566px" width="5" height="7" viewBox="0 0 5 7"><path d="M1 0.5 L4 3.5 L1 6.5" fill="none" stroke="#666" stroke-width="1.3"/></svg>
<svg class="a" style="left:56px;top:568px" width="9" height="3" viewBox="0 0 9 3"><circle cx="1.3" cy="1.3" r="1" fill="#444"/><circle cx="4.3" cy="1.3" r="1" fill="#444"/><circle cx="7.3" cy="1.3" r="1" fill="#444"/></svg>
<div class="t" style="left:80.80px;top:565.5px;font-size:8.9px;font-weight:normal;color:#333;transform:scaleX(0.995);transform-origin:0 0">Statements Summary 2044</div>
<div class="a" style="left:201px;top:560px;width:61.00px;height:16.5px;background:#ffff99"></div>
<div class="t" style="left:206.90px;top:565.5px;font-size:8.9px;font-weight:normal;color:#333;transform:scaleX(0.917);transform-origin:0 0">CAPEX 2044</div>
<div class="a" style="left:268px;top:560px;width:55.00px;height:16.5px;background:#ffff99"></div>
<div class="t" style="left:274.20px;top:565.5px;font-size:8.9px;font-weight:normal;color:#333;transform:scaleX(0.928);transform-origin:0 0">OPEX 2044</div>
<div class="t" style="left:336.00px;top:565.5px;font-size:8.9px;font-weight:normal;color:#333;transform:scaleX(0.973);transform-origin:0 0">Sales Summary Charts</div>
<div class="t" style="left:444.10px;top:565.5px;font-size:8.9px;font-weight:normal;color:#333;transform:scaleX(0.987);transform-origin:0 0">Key Metrics Charts</div>
<div class="t" style="left:536.50px;top:565.5px;font-size:8.9px;font-weight:normal;color:#333;transform:scaleX(0.954);transform-origin:0 0">Charts</div>
<div class="a" style="left:575.7px;top:558.5px;width:24.10px;height:18.0px;background:#ffffff"></div>
<div class="t" style="left:579.00px;top:564px;font-size:10px;font-weight:bold;color:#1a1a1a;transform:scaleX(0.749);transform-origin:0 0">BEA</div>
<div class="a" style="left:606px;top:560px;width:48.00px;height:16.5px;background:#ffff99"></div>
<div class="t" style="left:611.60px;top:565.5px;font-size:8.9px;font-weight:normal;color:#333;transform:scaleX(0.932);transform-origin:0 0">Expenses</div>
<div class="a" style="left:660px;top:560px;width:89.00px;height:16.5px;background:#ffff99"></div>
<div class="t" style="left:665.60px;top:565.5px;font-size:8.9px;font-weight:normal;color:#333;transform:scaleX(0.978);transform-origin:0 0">COGS Assumptions</div>
<div class="a" style="left:752px;top:560px;width:100.50px;height:16.5px;background:#ffff99"></div>
<div class="t" style="left:761.25px;top:565.5px;font-size:8.9px;font-weight:normal;color:#333;transform:scaleX(0.999);transform-origin:0 0">Salaries Assumptions</div>
<div class="t" style="left:863.75px;top:565.5px;font-size:8.9px;font-weight:normal;color:#333;transform:scaleX(0.992);transform-origin:0 0">Cha</div>
<div class="a" style="left:578px;top:574.5px;width:16.5px;height:1.3px;background:#217346"></div>
<svg class="a" style="left:886px;top:568px" width="9" height="3" viewBox="0 0 9 3"><circle cx="1.3" cy="1.3" r="1" fill="#444"/><circle cx="4.3" cy="1.3" r="1" fill="#444"/><circle cx="7.3" cy="1.3" r="1" fill="#444"/></svg>
<svg class="a" style="left:907px;top:565px" width="9" height="9" viewBox="0 0 9 9"><path d="M4.5 0 V9 M0 4.5 H9" stroke="#444" stroke-width="1"/></svg>
<svg class="a" style="left:931px;top:565px" width="3" height="10" viewBox="0 0 3 10"><circle cx="1.5" cy="1.5" r="0.9" fill="#555"/><circle cx="1.5" cy="5" r="0.9" fill="#555"/><circle cx="1.5" cy="8.5" r="0.9" fill="#555"/></svg>
<svg class="a" style="left:946px;top:566.5px" width="4" height="6" viewBox="0 0 4 6"><path d="M4 0 L0 3 L4 6Z" fill="#666"/></svg>
<div class="a" style="left:952.5px;top:567px;width:13px;height:5px;border-radius:3px;background:#6e6e6e"></div>
<svg class="a" style="left:981px;top:566.5px" width="4" height="6" viewBox="0 0 4 6"><path d="M0 0 L4 3 L0 6Z" fill="#666"/></svg>
<div class="t" style="left:7.7px;top:583.5px;font-size:7.6px;color:#444;transform:scaleX(0.82);transform-origin:0 0">Ready</div>
<svg class="a" style="left:40px;top:583px" width="10" height="9" viewBox="0 0 10 9">
<path d="M0.6 9 V0.6 H9.2 V4" fill="none" stroke="#666" stroke-width="1.1"/>
<path d="M2.2 2.6 H8 M2.2 4.6 H4.5 M2.2 6.6 H3.8" stroke="#777" stroke-width="0.9"/>
<circle cx="6.6" cy="6.4" r="2.4" fill="#f3f3f3" stroke="#555" stroke-width="0.9"/>
<circle cx="6.6" cy="6.4" r="1.1" fill="#222"/>
</svg>
<svg class="a" style="left:60px;top:582.5px" width="11" height="10" viewBox="0 0 11 10">
<circle cx="4" cy="1.2" r="1" fill="#555"/>
<path d="M0.5 2.8 H7.5 M4 2.8 V5.8 L2.3 9.5 M4 5.8 L5.2 7.5" fill="none" stroke="#555" stroke-width="1.1"/>
<path d="M5.6 7.2 L7 8.8 L10.4 4.8" fill="none" stroke="#444" stroke-width="1"/>
</svg>
<div class="t" style="left:72.3px;top:583.5px;font-size:7.6px;font-weight:bold;color:#222;transform:scaleX(0.87);transform-origin:0 0">Accessibility: Investigate</div>
<svg class="a" style="left:814px;top:582px" width="10" height="9" viewBox="0 0 10 9">
<rect x="0.5" y="0.5" width="9" height="8" fill="none" stroke="#444" stroke-width="1"/>
<path d="M3.5 0.5 V8.5 M6.5 0.5 V8.5 M0.5 3.2 H9.5 M0.5 5.8 H9.5" stroke="#444" stroke-width="0.8"/>
</svg>
<svg class="a" style="left:839px;top:582px" width="10" height="9" viewBox="0 0 10 9">
<rect x="0.5" y="0.5" width="9" height="8" fill="none" stroke="#666" stroke-width="1"/>
<path d="M3 0.5 V8.5 M5 0.5 V8.5 M7 0.5 V8.5" stroke="#666" stroke-width="0.8"/>
</svg>
<svg class="a" style="left:866px;top:582px" width="10" height="9" viewBox="0 0 10 9">
<path d="M0.5 8.5 V0.5 H9.5 V8.5 M0.5 5 H5.5 V0.5" fill="none" stroke="#666" stroke-width="1"/>
</svg>
<div class="a" style="left:888px;top:586.5px;width:4px;height:1px;background:#777"></div>
<div class="a" style="left:895px;top:586.5px;width:69px;height:1px;background:#888"></div>
<div class="a" style="left:928px;top:583px;width:2.5px;height:7px;background:#444"></div>
<div class="t" style="left:964px;top:582px;font-size:8px;color:#777">+</div>
<div class="t" style="left:978.5px;top:583.5px;font-size:7px;color:#555">100%</div>
</body></html>
